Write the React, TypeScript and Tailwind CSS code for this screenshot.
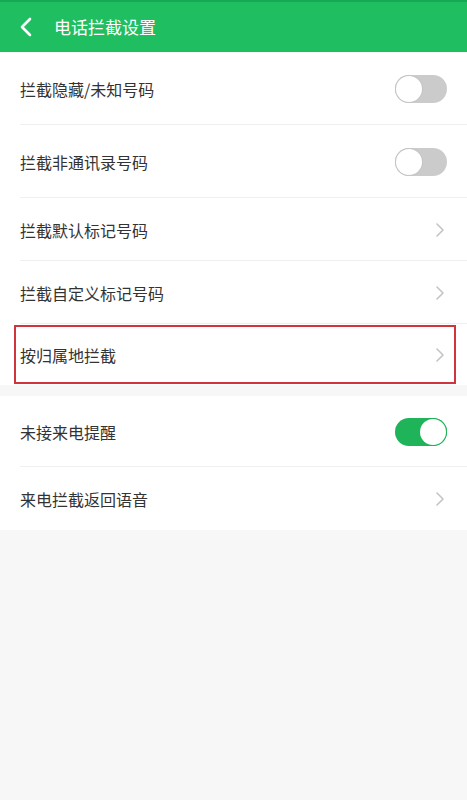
import React from 'react';

const FONT = { fontFamily: '"Noto Sans CJK SC", "Noto Sans", sans-serif' };

function Toggle({ on }: { on: boolean }) {
  return (
    <div
      className={`relative w-[52px] h-[28px] rounded-full ${on ? 'bg-[#1fb45a]' : 'bg-[#cbcbcb]'}`}
    >
      <div
        className={`absolute top-[1px] w-[26px] h-[26px] rounded-full bg-white ${on ? 'right-[1px]' : 'left-[1px]'}`}
        style={{ boxShadow: on ? '0 0 0 1px #1fb45a' : '0 0 0 1px #c4c4c4' }}
      />
    </div>
  );
}

function Chevron() {
  return (
    <svg width="10" height="16" viewBox="0 0 10 16" className="mr-[2px]">
      <path d="M2 2 L8 8 L2 14" fill="none" stroke="#c4c4c4" strokeWidth="1.6" strokeLinecap="round" strokeLinejoin="round" />
    </svg>
  );
}

type Row = { label: string; h: string; toggle?: boolean; on?: boolean; highlight?: boolean };

function SettingRow({ row, last }: { row: Row; last: boolean }) {
  return (
    <div className={`relative ${row.h}`}>
      <div className="flex items-center justify-between h-full pl-[20px] pr-[20px]">
        <span className="text-[16px] text-[#333333]">{row.label}</span>
        {row.toggle ? <Toggle on={!!row.on} /> : <Chevron />}
      </div>
      {!last && <div className="absolute bottom-0 left-[20px] right-0 h-px bg-[#f0f0f0]" />}
      {row.highlight && (
        <div className="absolute left-[14px] right-[11px] top-[1px] bottom-[1px] border-2 border-[#d0343d] pointer-events-none" />
      )}
    </div>
  );
}

const GROUP1: Row[] = [
  { label: '拦截隐藏/未知号码', h: 'h-[72px]', toggle: true, on: false },
  { label: '拦截非通讯录号码', h: 'h-[73px]', toggle: true, on: false },
  { label: '拦截默认标记号码', h: 'h-[63px]' },
  { label: '拦截自定义标记号码', h: 'h-[63px]' },
  { label: '按归属地拦截', h: 'h-[61px]', highlight: true },
];

const GROUP2: Row[] = [
  { label: '未接来电提醒', h: 'h-[71px]', toggle: true, on: true },
  { label: '来电拦截返回语音', h: 'h-[63px]' },
];

export default function App() {
  return (
    <div className="w-[467px] h-[800px] bg-[#f7f7f7] overflow-hidden" style={FONT}>
      <div className="h-[52px] bg-[#1fbe61] flex items-center border-t-[2px] border-[#17a853]">
        <svg width="14" height="20" viewBox="0 0 14 20" className="ml-[19px]">
          <path d="M11 2 L3 10 L11 18" fill="none" stroke="#ffffff" strokeWidth="2.6" strokeLinecap="round" strokeLinejoin="round" />
        </svg>
        <span className="ml-[21px] text-[17px] text-white">电话拦截设置</span>
      </div>
      <div className="bg-white mt-[1px]">
        {GROUP1.map((r, i) => (
          <SettingRow key={r.label} row={r} last={i === GROUP1.length - 1} />
        ))}
      </div>
      <div className="bg-white mt-[11px]">
        {GROUP2.map((r, i) => (
          <SettingRow key={r.label} row={r} last={i === GROUP2.length - 1} />
        ))}
      </div>
    </div>
  );
}
